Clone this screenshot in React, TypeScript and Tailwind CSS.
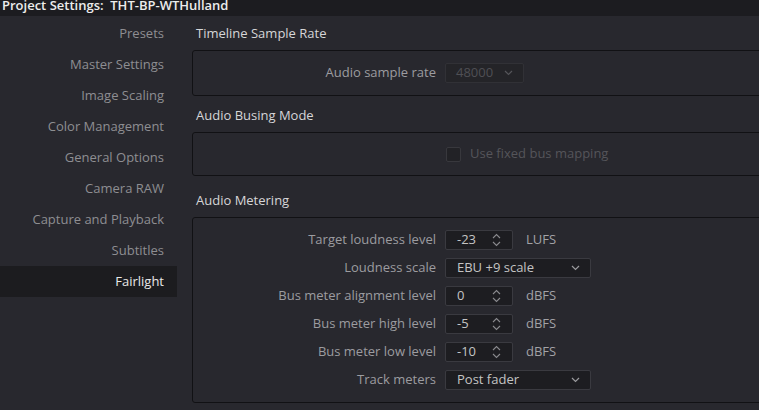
import React from "react";

const font = { fontFamily: '"Open Sans", "Noto Sans", sans-serif' };

function Chevron({ className = "" }: { className?: string }) {
  return (
    <svg width="9" height="6" viewBox="0 0 9 6" className={className}>
      <path d="M1 1 L4.5 4.5 L8 1" fill="none" stroke="currentColor" strokeWidth="1.2" />
    </svg>
  );
}

function Spin() {
  return (
    <svg width="9" height="16" viewBox="0 0 9 16" className="text-[#8a8a8e]">
      <path d="M1 6 L4.5 2.5 L8 6" fill="none" stroke="currentColor" strokeWidth="1.1" />
      <path d="M1 10 L4.5 13.5 L8 10" fill="none" stroke="currentColor" strokeWidth="1.1" />
    </svg>
  );
}

function SpinBox({ value, unit }: { value: string; unit: string }) {
  return (
    <div className="flex items-center">
      <div className="flex h-[20px] w-[68px] items-center justify-between rounded-[2px] border border-[#3a3a40] bg-[#1d1d21] pl-[11px] pr-[11px] text-[13px] text-[#c4c4c4]">
        <span>{value}</span>
        <Spin />
      </div>
      <span className="ml-[13px] text-[13px] text-[#a2a2a6]">{unit}</span>
    </div>
  );
}

function Select({ value, width }: { value: string; width: string }) {
  return (
    <div className={`flex h-[20px] ${width} items-center justify-between rounded-[2px] border border-[#3a3a40] bg-[#1d1d21] pl-[11px] pr-[10px] text-[13px] text-[#c4c4c4]`}>
      <span>{value}</span>
      <Chevron className="text-[#9a9a9e]" />
    </div>
  );
}

function Row({ label, children }: { label: string; children: React.ReactNode }) {
  return (
    <div className="flex h-[28px] items-center">
      <div className="w-[243px] shrink-0 text-right text-[13px] text-[#9c9ca0]">{label}</div>
      <div className="ml-[9px]">{children}</div>
    </div>
  );
}

function Header({ children, className = "" }: { children: React.ReactNode; className?: string }) {
  return (
    <div className={`flex h-[32px] items-center pl-[4px] text-[13px] text-[#d6d6d8] ${className}`}>{children}</div>
  );
}

const sidebar = [
  "Presets",
  "Master Settings",
  "Image Scaling",
  "Color Management",
  "General Options",
  "Camera RAW",
  "Capture and Playback",
  "Subtitles",
  "Fairlight",
];

export default function App() {
  return (
    <div style={font} className="flex h-[410px] w-[759px] flex-col overflow-hidden bg-[#28282e]">
      <div className="h-[16px] shrink-0 overflow-hidden bg-[#1c1c20] pl-[2px]">
        <div className="mt-[-3px] whitespace-pre text-[13px] font-semibold leading-[17px] text-[#ececec]">
          Project Settings:  THT-BP-WTHulland
        </div>
      </div>
      <div className="flex min-h-0 flex-1">
        <div className="w-[177px] shrink-0 pt-[2px]">
          {sidebar.map((s) => (
            <div
              key={s}
              className={`flex h-[31px] items-center justify-end pr-[13px] text-[13px] ${
                s === "Fairlight" ? "bg-[#1c1c1f] text-[#e8e8e8]" : "text-[#8e8e92]"
              }`}
            >
              {s}
            </div>
          ))}
        </div>
        <div className="min-w-0 flex-1 overflow-hidden pl-[15px] pt-[2px]">
          <div className="w-[620px]">
            <Header>Timeline Sample Rate</Header>
            <div className="flex h-[46px] items-center rounded-[3px] border border-[#111114]">
              <Row label="Audio sample rate">
                <div className="flex h-[20px] w-[79px] items-center justify-between rounded-[2px] border border-[#313136] bg-[#242428] pl-[10px] pr-[10px] text-[13px] text-[#4f4f54]">
                  <span>48000</span>
                  <Chevron className="text-[#55555a]" />
                </div>
              </Row>
            </div>
            <Header className="mt-[4px]">Audio Busing Mode</Header>
            <div className="flex h-[44px] items-center rounded-[3px] border border-[#111114]">
              <div className="ml-[253px] flex items-center">
                <div className="h-[15px] w-[15px] rounded-[2px] border border-[#38383d] bg-[#222226]" />
                <span className="ml-[9px] text-[13px] text-[#55555a]">Use fixed bus mapping</span>
              </div>
            </div>
            <Header className="mt-[9px]">Audio Metering</Header>
            <div className="flex h-[186px] flex-col rounded-[3px] border border-[#111114] pt-[8px]">
              <Row label="Target loudness level">
                <SpinBox value="-23" unit="LUFS" />
              </Row>
              <Row label="Loudness scale">
                <Select value="EBU +9 scale" width="w-[146px]" />
              </Row>
              <Row label="Bus meter alignment level">
                <SpinBox value="0" unit="dBFS" />
              </Row>
              <Row label="Bus meter high level">
                <SpinBox value="-5" unit="dBFS" />
              </Row>
              <Row label="Bus meter low level">
                <SpinBox value="-10" unit="dBFS" />
              </Row>
              <Row label="Track meters">
                <Select value="Post fader" width="w-[146px]" />
              </Row>
            </div>
          </div>
        </div>
      </div>
    </div>
  );
}
